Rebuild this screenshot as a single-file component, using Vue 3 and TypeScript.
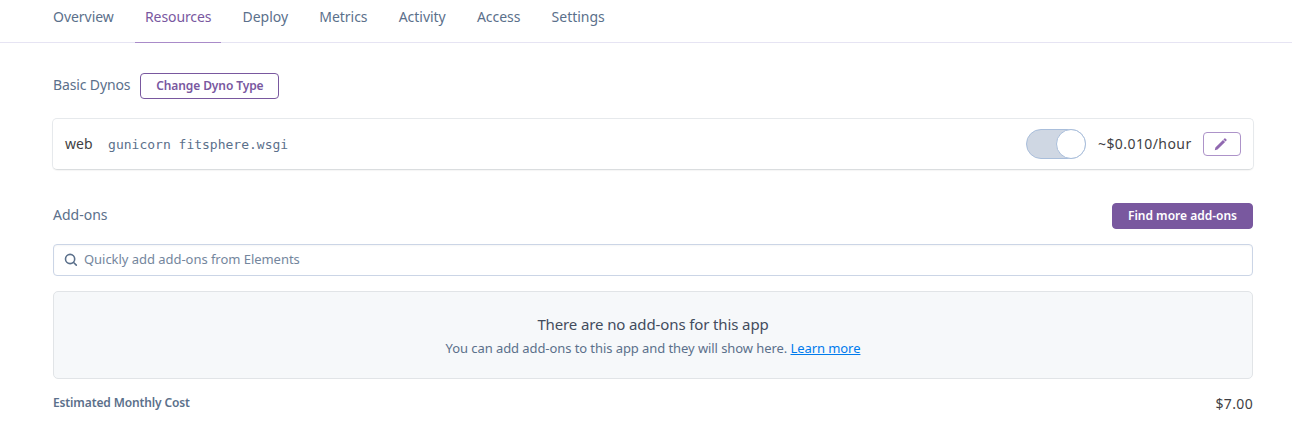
<script setup lang="ts">
interface Tab {
  label: string
  active?: boolean
}

const tabs: Tab[] = [
  { label: 'Overview' },
  { label: 'Resources', active: true },
  { label: 'Deploy' },
  { label: 'Metrics' },
  { label: 'Activity' },
  { label: 'Access' },
  { label: 'Settings' },
]
</script>

<template>
  <div class="page">
    <nav class="tabs">
      <a v-for="tab in tabs" :key="tab.label" class="tab" :class="{ active: tab.active }">{{ tab.label }}</a>
    </nav>

    <main class="content">
      <section class="heading">
        <span class="title">Basic Dynos</span>
        <button class="btn outline">Change Dyno Type</button>
      </section>

      <section class="dyno">
        <span class="process">web</span>
        <code class="command">gunicorn fitsphere.wsgi</code>
        <span class="toggle"><span class="knob"></span></span>
        <span class="price">~$0.010/hour</span>
        <button class="edit" aria-label="Edit">
          <svg width="14" height="14" viewBox="0 0 14 14">
            <path d="M.8 13.2l.6-2.7L9 2.9l2.1 2.1-7.6 7.6z M9.4 2.5l1-1q.5-.4 1 0l1.1 1.1q.4.5 0 1l-1 1z" fill="#9068b0" />
          </svg>
        </button>
      </section>

      <section class="heading addons">
        <span class="title">Add-ons</span>
        <button class="btn solid">Find more add-ons</button>
      </section>

      <div class="search">
        <svg width="14" height="14" viewBox="0 0 14 14" fill="none" stroke="#5b708b" stroke-width="1.6" stroke-linecap="round">
          <circle cx="6.1" cy="6" r="4.6" />
          <path d="M9.6 9.5l2.7 2.6" />
        </svg>
        <span class="placeholder">Quickly add add-ons from Elements</span>
      </div>

      <section class="empty">
        <div class="empty-title">There are no add-ons for this app</div>
        <div class="empty-text"><span>You can add add-ons to this app and they will show here. </span><a class="link">Learn more</a></div>
      </section>

      <footer class="cost">
        <span class="cost-label">Estimated Monthly Cost</span>
        <span class="total">$7.00</span>
      </footer>
    </main>
  </div>
</template>

<style>
body {
  margin: 0;
  background: #fff;
}
</style>

<style scoped>
.page {
  box-sizing: border-box;
  height: 444px;
  overflow: hidden;
  font-family: "Noto Sans", "Open Sans", sans-serif;
  font-size: 14px;
  color: #5b708b;
  white-space: nowrap;
}
.page * {
  box-sizing: border-box;
}
.tabs {
  display: flex;
  gap: 11.2px;
  height: 43px;
  padding-left: 43px;
  border-bottom: 1px solid #e6e4f3;
}
.tab {
  height: 43px;
  padding: 0 10px;
  line-height: 34px;
  letter-spacing: -0.03px;
}
.tab.active {
  color: #79589f;
  letter-spacing: -0.1px;
  border-bottom: 1px solid #a98bc9;
}
.content {
  width: 1200px;
  margin-left: 53px;
}
.heading {
  display: flex;
  align-items: center;
  height: 26px;
  margin-top: 30px;
}
.title {
  line-height: 24px;
  letter-spacing: -0.13px;
  margin-bottom: 2px;
}
.addons .title {
  letter-spacing: 0;
}
.btn {
  height: 26px;
  padding: 0;
  border: 1px solid #79589f;
  border-radius: 4px;
  font: 600 12px/24px "Noto Sans", "Open Sans", sans-serif;
}
.outline {
  width: 139px;
  margin-left: 10px;
  color: #79589f;
  background: #fff;
  letter-spacing: -0.1px;
}
.solid {
  width: 141px;
  margin-left: auto;
  color: #fff;
  background: #79589f;
}
.dyno {
  display: flex;
  align-items: center;
  height: 52px;
  margin: 19px -1px 0;
  padding: 0 12px;
  border: 1px solid #e6e9ec;
  border-bottom-color: #dadddf;
  border-radius: 5px;
  box-shadow: 0 1px 1px rgba(0, 0, 0, 0.04);
  color: #3f3f44;
}
.process,
.price {
  padding-bottom: 1px;
}
.command {
  margin: 2px 0 0 15.6px;
  font: 13px/18px "DejaVu Sans Mono", monospace;
  color: #5b708b;
}
.toggle {
  display: flex;
  justify-content: flex-end;
  width: 60px;
  height: 30px;
  margin-left: auto;
  border: 1px solid #a9bedb;
  border-radius: 15px;
  background: #cfd7e3;
}
.knob {
  width: 30px;
  height: 30px;
  margin: -1px -1px 0 0;
  border: 1px solid #a9bedb;
  border-radius: 50%;
  background: #fff;
}
.price {
  width: 93px;
  margin-left: 12px;
  letter-spacing: 0.42px;
}
.edit {
  display: flex;
  align-items: center;
  justify-content: center;
  width: 38px;
  height: 24px;
  margin-left: 12px;
  padding: 0 2px 0 0;
  border: 1px solid #ad93c9;
  border-radius: 4px;
  background: #fff;
}
.addons {
  margin-top: 33px;
}
.search {
  display: flex;
  align-items: center;
  height: 32px;
  margin-top: 15px;
  padding-left: 10px;
  border: 1px solid #cbd5e6;
  border-radius: 4px;
  box-shadow: inset 0 1px 2px rgba(0, 0, 0, 0.04);
}
.placeholder {
  margin-left: 6px;
  padding-bottom: 2px;
  font-size: 13px;
  letter-spacing: -0.04px;
  color: #74869d;
}
.empty {
  height: 88px;
  margin-top: 15px;
  padding-top: 21px;
  border: 1px solid #e1e4e7;
  border-radius: 5px;
  background: #f6f8fa;
  text-align: center;
}
.empty-title {
  font-size: 15px;
  line-height: 22px;
  letter-spacing: -0.12px;
  color: #434c5d;
}
.empty-text {
  font-size: 13px;
  line-height: 26px;
  letter-spacing: -0.075px;
}
.link {
  color: #007bed;
  text-decoration: underline;
}
.cost {
  display: flex;
  justify-content: space-between;
  margin-top: 14px;
}
.cost-label {
  font-size: 12px;
  font-weight: 600;
  line-height: 20px;
  letter-spacing: -0.13px;
}
.total {
  line-height: 22px;
  letter-spacing: 0.35px;
  color: #3f3f44;
}
</style>
